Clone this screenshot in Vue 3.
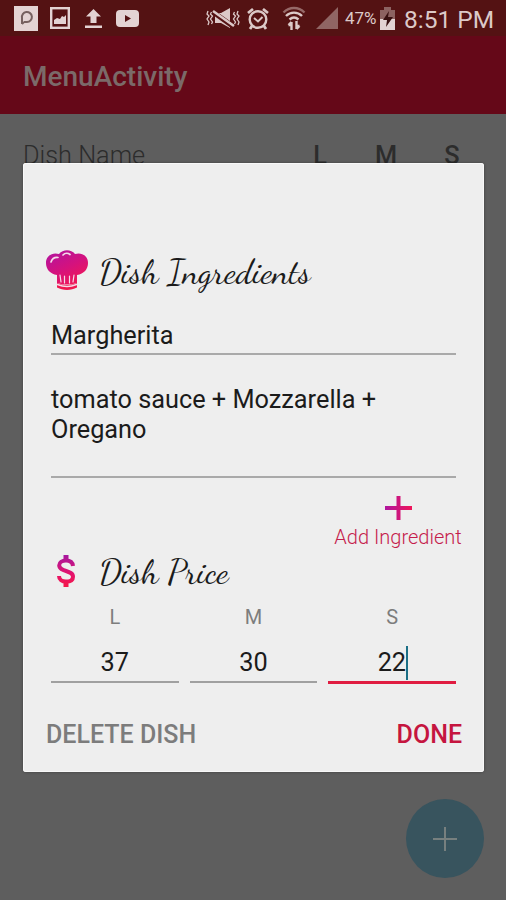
<template>
    <div class="screen">
        <header class="status-bar">
            <div class="notifications">
                <svg class="i-app" viewBox="0 0 24 25">
                    <rect width="24" height="25" fill="#e3d3d3" />
                    <path d="M8 18v-6a5 5 0 1 1 5 4h-3" fill="none" stroke="#76605f" stroke-width="2" />
                    <path d="M8 18l2-2" stroke="#76605f" stroke-width="2" />
                </svg>
                <svg class="i-image" viewBox="0 0 20 22">
                    <rect x="1.2" y="1.2" width="17.6" height="19.6" fill="none" stroke="#e3d3d3" stroke-width="2.4" />
                    <path d="M4 17v-4l3-2 3 1 2-3 2 1 2-2v9z" fill="#e3d3d3" />
                </svg>
                <svg class="i-upload" viewBox="0 0 17 19">
                    <path d="M8.500 0L16 7.500h-4.500V14h-6V7.500H1zM0 16.500h17V19H0z" fill="#e3d3d3" />
                </svg>
                <svg class="i-video" viewBox="0 0 23 17">
                    <rect width="23" height="17" rx="4" fill="#e3d3d3" />
                    <path d="M9 5l6 3.500-6 3.500z" fill="#541213" />
                </svg>
            </div>
            <div class="indicators">
                <svg class="i-mute" viewBox="0 0 34 22" fill="none" stroke="#dcc9c8">
                    <path d="M2 4l-1 3 2 2-2 3 2 3-1 3M5.500 5l-1 2 2 2-2 3 2 3-1 2M28.500 5l-1 2 2 2-2 3 2 3-1 2M32 4l-1 3 2 2-2 3 2 3-1 3"
                        stroke-width="1.300" />
                    <path d="M9 6h6l9-5v20l-9-5H9z" fill="#dcc9c8" stroke="none" />
                    <path d="M7 5l21 15" stroke="#541213" stroke-width="5" />
                    <path d="M7 4l21 15" stroke-width="2.600" />
                </svg>
                <svg class="i-alarm" viewBox="0 0 22 23" fill="none" stroke="#dcc9c8" stroke-width="2.400">
                    <circle cx="11" cy="12.500" r="8.300" />
                    <path d="M7 11l4 3.500 4.500-4.500" stroke-width="2" />
                    <path d="M1 6l5-4M21 6l-5-4M5 19l-2 3M17 19l2 3" stroke-width="2.800" />
                </svg>
                <svg class="i-wifi" viewBox="0 0 24 25" fill="none" stroke="#dcc9c8" stroke-width="2.400">
                    <path d="M1.500 6.500c6-6 15-6 21 0" stroke="#966968" />
                    <path d="M4 10c4.500-4.500 11.500-4.500 16 0M7.500 13.500c3-2.600 6-2.600 9 0" />
                    <path d="M9.500 24v-8M6.500 19l3-3M14.500 15v8M17.500 20l-3 3M6.500 19h3M14.500 20h3" />
                </svg>
                <svg class="i-signal" viewBox="0 0 22 22">
                    <path d="M22 0v22H0z" fill="#906564" />
                </svg>
                <span class="percent">47%</span>
                <svg class="i-battery" viewBox="0 0 15 23">
                    <path d="M4 0h7v3h4v20H0V3h4z" fill="#8c6261" />
                    <path d="M0 12h15v11H0z" fill="#e3d3d3" />
                    <path d="M9 4L3 13h4l-1 7 7-10H8z" fill="#381011" />
                </svg>
                <span class="clock">8:51 PM</span>
            </div>
        </header>

        <div class="toolbar">MenuActivity</div>

        <main class="content">
            <div class="list-head">
                <span class="name">Dish Name</span>
                <b v-for="size in sizes" :key="size.label">{{ size.label }}</b>
            </div>
        </main>

        <button class="fab" title="Add dish">
            <svg viewBox="0 0 24 24">
                <path d="M12 0v24M0 12h24" stroke="#77807f" stroke-width="2" />
            </svg>
        </button>

        <div class="overlay">
            <section class="dialog">
                <div class="title">
                    <svg class="hat" viewBox="0 0 42 41">
                        <defs>
                            <linearGradient id="hatFill" x1="6" y1="0" x2="26" y2="40" gradientUnits="userSpaceOnUse">
                                <stop offset="0" stop-color="#b3149f" />
                                <stop offset="0.500" stop-color="#d5127d" />
                                <stop offset="1" stop-color="#f5174f" />
                            </linearGradient>
                        </defs>
                        <path d="M11 25C4 24 0 19 0 13 0 6 6 2 13 4c4-5 12-5 16 0 7-2 13 2 13 9 0 6-4 11-11 12v8q-10 3-20 0z"
                            fill="url(#hatFill)" />
                        <path d="M11 33c6 2.500 14 2.500 20 0v4.500c-6 3.300-14 3.300-20 0z" fill="#ef174f" />
                        <g fill="none" stroke="#f3dce8" stroke-linecap="round">
                            <path d="M5 12c1-3 3-5 7-4.500M17 5c2-2 5-2 7-.500" stroke-width="1.700" />
                            <path d="M14 25l1 7M18.500 26v7M23.500 26v7M28 25l-1 7" stroke-width="1.200" />
                            <path d="M11.500 34.500c6 2.500 13 2.500 19 0" stroke-width="1.500" />
                        </g>
                    </svg>
                    <h2>Dish Ingredients</h2>
                </div>

                <div class="field dish-name">{{ dish.name }}</div>
                <div class="field dish-ingredients">{{ dish.ingredients }}</div>

                <button class="add">
                    <svg viewBox="0 0 27 24">
                        <defs>
                            <linearGradient id="plusFill">
                                <stop offset="0" stop-color="#ae169f" />
                                <stop offset="1" stop-color="#f01558" />
                            </linearGradient>
                        </defs>
                        <path d="M11.500 0h4v10H27v4H15.500v10h-4V14H0v-4h11.500z" fill="url(#plusFill)" />
                    </svg>
                    <span>Add Ingredient</span>
                </button>

                <div class="title price-title">
                    <svg class="dollar" viewBox="0 0 18 32">
                        <defs>
                            <linearGradient id="dollarFill" x1="0" y1="0" x2="0" y2="32" gradientUnits="userSpaceOnUse">
                                <stop offset="0" stop-color="#a5179f" />
                                <stop offset="0.600" stop-color="#e5136b" />
                                <stop offset="1" stop-color="#f51848" />
                            </linearGradient>
                        </defs>
                        <path d="M9 0v5M9 27v5" fill="none" stroke="url(#dollarFill)" stroke-width="5" />
                        <path d="M16 11C15.600 7.200 13 5.500 9 5.500c-4 0-6.800 1.800-6.800 4.800 0 7 13.800 4.400 13.800 11.400 0 3.300-3 4.900-7 4.900S2 24.600 2 21"
                            fill="none" stroke="url(#dollarFill)" stroke-width="4" />
                    </svg>
                    <h2>Dish Price</h2>
                </div>

                <div class="prices">
                    <div v-for="size in sizes" :key="size.label" class="size" :class="{ focused: size.label === focused }">
                        <label>{{ size.label }}</label>
                        <div class="value"><span>{{ size.price }}</span></div>
                    </div>
                </div>

                <div class="actions">
                    <button class="delete">DELETE DISH</button>
                    <button class="done">DONE</button>
                </div>
            </section>
        </div>
    </div>
</template>

<script setup>
import { ref } from 'vue'

const dish = ref({
    name: 'Margherita',
    ingredients: 'tomato sauce + Mozzarella + Oregano'
})
const sizes = ref([
    { label: 'L', price: 37 },
    { label: 'M', price: 30 },
    { label: 'S', price: 22 }
])
const focused = ref('S')
</script>

<style>
body {
    margin: 0;
    background: #5e5e5e;
}
</style>

<style scoped>
* {
    box-sizing: border-box;
}

.screen {
    position: relative;
    height: 900px;
    overflow: hidden;
    background: #5e5e5e;
    font-family: Roboto, "Liberation Sans", sans-serif;
}

svg {
    display: block;
    flex: none;
}

button {
    padding: 0;
    border: none;
    background: none;
    font-family: inherit;
}

.status-bar {
    height: 36px;
    padding: 0 11px 0 14px;
    display: flex;
    justify-content: space-between;
    align-items: center;
    background: #541213;
    color: #dcc9c8;
}

.notifications,
.indicators {
    display: flex;
    align-items: center;
}

.notifications {
    gap: 13px;
}

.i-app {
    width: 24px;
    height: 25px;
}

.i-image {
    width: 20px;
    height: 22px;
    margin-left: -1px;
}

.i-upload {
    width: 17px;
    height: 19px;
    margin-left: 2px;
}

.i-video {
    width: 23px;
    height: 17px;
    margin-left: 1px;
}

.i-mute {
    width: 34px;
    height: 22px;
}

.i-alarm {
    width: 22px;
    height: 23px;
    margin-left: 7px;
}

.i-wifi {
    width: 24px;
    height: 25px;
    margin-left: 13px;
}

.i-signal {
    width: 22px;
    height: 22px;
    margin-left: 10px;
}

.percent {
    width: 32px;
    margin-left: 7px;
    font-size: 17px;
    line-height: 38px;
    white-space: nowrap;
}

.i-battery {
    width: 15px;
    height: 23px;
    margin-left: 3px;
}

.clock {
    width: 91px;
    margin-left: 9px;
    padding-top: 3px;
    font-size: 24.5px;
    line-height: 36px;
    white-space: nowrap;
}

.toolbar {
    height: 78px;
    padding-left: 23px;
    background: #650818;
    color: #7b6a69;
    font-size: 28px;
    font-weight: 500;
    line-height: 82px;
}

.content {
    padding: 26px 21px 0 23px;
}

.list-head {
    display: flex;
    color: #2c2c2c;
    font-size: 25.3px;
    line-height: 32px;
}

.list-head .name {
    flex: 1;
    font-weight: 300;
}

.list-head b {
    width: 66px;
    font-weight: 500;
    text-align: center;
}

.fab {
    position: absolute;
    right: 22px;
    bottom: 22px;
    width: 78px;
    height: 79px;
    display: flex;
    align-items: center;
    justify-content: center;
    border-radius: 50%;
    background: #38545e;
}

.fab svg {
    width: 24px;
    height: 24px;
}

.overlay {
    position: absolute;
    inset: 0;
    padding: 163px 22px 128px 23px;
}

.dialog {
    height: 609px;
    padding-top: 86px;
    border-radius: 3px;
    background: #eeeeee;
    box-shadow: inset 0 0 0 1px #f8f8f8, 0 0 3px rgba(0, 0, 0, 0.35);
    color: #1b1b1b;
}

.title {
    height: 46px;
    display: flex;
    align-items: center;
}

.hat {
    width: 42px;
    height: 41px;
    margin: 0 11px 4px 23px;
}

.title h2 {
    margin: 0;
    font-family: "Dancing Script", "Liberation Serif", cursive;
    font-size: 34.8px;
    font-weight: 400;
    line-height: 46px;
    white-space: nowrap;
}

.field {
    margin: 0 28px;
    border-bottom: 2px solid #a9a9a9;
    font-size: 25.3px;
    line-height: 30px;
}

.dish-name {
    height: 60px;
    padding-top: 26px;
}

.dish-ingredients {
    height: 123px;
    padding: 30px 50px 0 0;
}

.add {
    width: 130px;
    height: 58px;
    margin: 0 21px 0 auto;
    padding-top: 18px;
    display: flex;
    flex-direction: column;
    align-items: center;
    color: #c51c4c;
    font-size: 20px;
    font-weight: 300;
    line-height: 24px;
    white-space: nowrap;
}

.add svg {
    width: 27px;
    height: 24px;
    margin-bottom: 5px;
}

.price-title {
    height: 46px;
    margin-top: 13px;
}

.dollar {
    width: 18px;
    height: 32px;
    margin: 0 24px 2px 34px;
}

.prices {
    margin: 10px 28px 0;
    display: flex;
    gap: 11px;
}

.size {
    flex: 1;
    text-align: center;
}

.size label {
    display: block;
    color: #7d7d7d;
    font-size: 20px;
    line-height: 24px;
}

.value {
    height: 54px;
    padding-top: 17px;
    border-bottom: 2px solid #a0a0a0;
    font-size: 25.3px;
    line-height: 34px;
}

.value span {
    display: inline-block;
}

.focused .value {
    height: 55px;
    border-bottom: 3px solid #e01c41;
}

/* text caret */
.focused .value span {
    margin-right: -1px;
    border-right: 2px solid #1b6f86;
    letter-spacing: -0.3px;
}

.actions {
    margin: 34px 22px 0 23px;
    display: flex;
    justify-content: space-between;
}

.actions button {
    font-size: 25px;
    font-weight: 500;
    line-height: 34px;
    white-space: nowrap;
}

.delete {
    color: #7c7c7c;
}

.done {
    color: #c5153f;
}
</style>
